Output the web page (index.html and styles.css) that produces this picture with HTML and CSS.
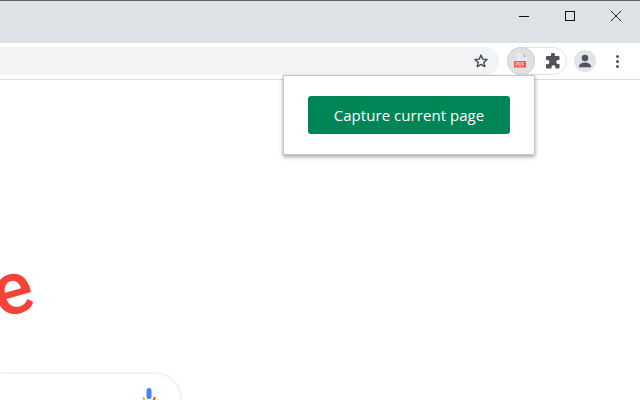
FILE: index.html
```html
<!DOCTYPE html>
<html lang="en">
<head>
<meta charset="utf-8">
<title>Capture current page</title>
<link rel="stylesheet" href="styles.css">
</head>
<body>
<header class="titlebar">
  <button class="win-btn"><svg width="12" height="12" viewBox="0 0 12 12"><path d="M1 6.500h10" stroke="#111" fill="none"/></svg></button>
  <button class="win-btn"><svg width="12" height="12" viewBox="0 0 12 12"><rect x="1.500" y="1.500" width="9" height="9" stroke="#111" fill="none"/></svg></button>
  <button class="win-btn"><svg width="12" height="12" viewBox="0 0 12 12"><path d="M.8.8l10.400 10.400M11.200.8L.8 11.200" stroke="#222" fill="none"/></svg></button>
</header>
<nav class="toolbar">
  <div class="omnibox">
    <svg class="star" width="16" height="16" viewBox="0 0 16 16"><path d="M8 2.100l1.750 4 4.350.4-3.300 2.850 1 4.250L8 11.350 4.200 13.600l1-4.250L1.900 6.500l4.350-.4z" fill="none" stroke="#444a50" stroke-width="1.400" stroke-linejoin="round"/></svg>
  </div>
  <div class="ext-pill">
    <div class="ext-active">
      <svg width="16" height="18" viewBox="0 0 16 18"><path d="M4 1h6l4 4v10H4z" fill="#e9e9eb"/><path d="M10 1l4 4h-4z" fill="#bcc3cf"/><rect x="1" y="9" width="12" height="6.500" fill="#f4564a"/><text class="pdf-label" x="7" y="14">PDF</text></svg>
    </div>
    <div class="ext-puzzle">
      <svg width="16" height="16" viewBox="0 0 16 16"><path d="M6 1.500a1.900 1.900 0 0 1 3.800 0V3h3.700a1 1 0 0 1 1 1v3h-1.300a2 2 0 0 0 0 4h1.300v3.500a1 1 0 0 1-1 1h-3v-1.300a2 2 0 0 0-4 0v1.300H2a1 1 0 0 1-1-1v-3.200h1.300a2.100 2.100 0 0 0 0-4.200H1V4a1 1 0 0 1 1-1h4z" fill="#50555c"/></svg>
    </div>
  </div>
  <div class="avatar">
    <svg width="22" height="22" viewBox="0 0 22 22"><circle cx="11" cy="8" r="3.300" fill="#4d5560"/><path d="M5 16.500c0-2.600 3.500-4 6-4s6 1.400 6 4v.8H5z" fill="#4d5560"/></svg>
  </div>
  <div class="menu"><i></i><i></i><i></i></div>
</nav>
<main class="page">
  <span class="logo-letter">e</span>
  <div class="searchbox">
    <svg class="mic" width="14" height="20" viewBox="0 0 14 20"><rect x="4.500" y="0" width="5" height="11" rx="2.500" fill="#4285f4"/><path d="M1.500 9c0 2 .8 3.500 2.200 4.500" stroke="#fbbc05" stroke-width="1.800" fill="none"/><path d="M12.500 9c0 1.800-.7 3.300-2 4.300" stroke="#ea4335" stroke-width="1.800" fill="none"/></svg>
  </div>
  <section class="popup">
    <button class="capture">Capture current page</button>
  </section>
</main>
</body>
</html>
```
FILE: styles.css
```css
html, body {
  margin: 0;
  padding: 0;
  width: 640px;
  height: 400px;
  overflow: hidden;
  background: #fff;
  font-family: "Open Sans", sans-serif;
}
body {
  display: flex;
  flex-direction: column;
}
.titlebar {
  height: 42px;
  flex: none;
  background: #dee1e6;
  border-top: 1px solid #5f6368;
  display: flex;
  justify-content: flex-end;
  align-items: flex-start;
  padding-right: 1px;
}
.win-btn {
  width: 46px;
  height: 29px;
  padding: 0;
  border: 0;
  background: none;
  display: flex;
  align-items: center;
  justify-content: center;
}
.toolbar {
  height: 36px;
  flex: none;
  background: #fff;
  border-bottom: 1px solid #dadce0;
  display: flex;
  align-items: center;
}
.omnibox {
  width: 499px;
  height: 28px;
  flex: none;
  background: #f1f3f4;
  border-radius: 0 14px 14px 0;
  display: flex;
  align-items: center;
  justify-content: flex-end;
  padding-right: 10px;
  box-sizing: border-box;
}
.ext-pill {
  margin-left: 8px;
  width: 60px;
  height: 28px;
  box-sizing: border-box;
  border: 1px solid #e3e4e6;
  border-radius: 14px;
  display: flex;
  align-items: center;
  justify-content: space-between;
}
.ext-active {
  width: 28px;
  height: 28px;
  margin-left: -1px;
  border-radius: 50%;
  background: #dfe0e2;
  box-shadow: inset 0 0 0 1px #d4d5d7;
  display: flex;
  align-items: center;
  justify-content: center;
}
.pdf-label {
  font-family: "Liberation Sans", sans-serif;
  font-size: 4.500px;
  font-weight: 700;
  text-anchor: middle;
  fill: #fbd0cb;
}
.ext-puzzle {
  width: 26px;
  display: flex;
  justify-content: center;
}
.avatar {
  width: 22px;
  height: 22px;
  margin-left: 7px;
  border-radius: 50%;
  background: #e1e3e7;
}
.menu {
  margin-left: 20px;
  display: flex;
  flex-direction: column;
  gap: 2px;
}
.menu i {
  width: 3px;
  height: 3px;
  border-radius: 50%;
  background: #50555c;
}
.page {
  position: relative;
  flex: 1;
  min-height: 0;
  background: #fff;
}
.logo-letter {
  position: absolute;
  left: -8px;
  top: 159px;
  font-family: Roboto, sans-serif;
  font-weight: 500;
  font-size: 74px;
  line-height: 100px;
  color: #f44336;
  transform: rotate(-16deg);
}
.searchbox {
  position: absolute;
  left: 0;
  top: 294px;
  width: 180px;
  height: 26px;
  overflow: hidden;
  border-radius: 0 24px 0 0;
  background: #fff;
  box-shadow: 0 0 3px rgba(60, 64, 67, .25);
}
.mic {
  position: absolute;
  left: 142px;
  top: 14px;
}
.popup {
  position: absolute;
  left: 283px;
  top: -5px;
  width: 252px;
  height: 80px;
  box-sizing: border-box;
  background: #fff;
  border: 1px solid #c6c7c9;
  box-shadow: 0 2px 4px rgba(0, 0, 0, .35);
  padding: 20px 24px;
}
.capture {
  display: block;
  width: 202px;
  height: 38px;
  border: 0;
  border-radius: 3px;
  background: #008556;
  color: #fff;
  font-family: "Open Sans", sans-serif;
  font-size: 15px;
  letter-spacing: .05px;
  padding: 0;
}
```
